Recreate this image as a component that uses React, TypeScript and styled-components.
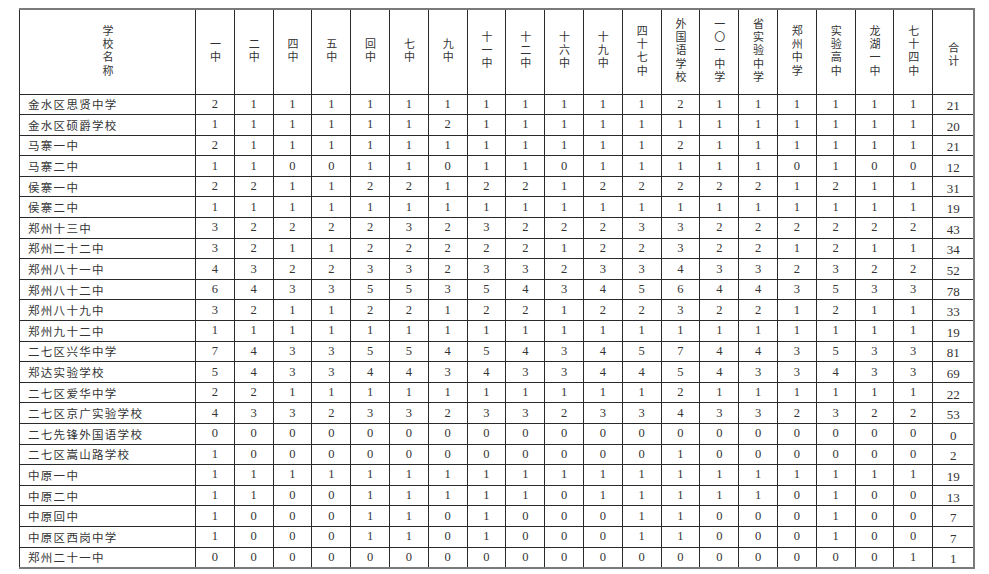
import React from 'react'
import styled, { createGlobalStyle } from 'styled-components'

const GlobalStyle = createGlobalStyle`
  html, body {
    margin: 0;
    padding: 0;
    background: #fff;
  }
  body {
    font-family: "Liberation Serif", "Noto Sans CJK SC", serif;
    color: #222;
  }
`

const Page = styled.div`
  padding: 8px 0 0 19px;
`

const Table = styled.table`
  border-collapse: collapse;
  table-layout: fixed;
  width: 955px;
  border-top: 2px solid #7a7a7a;
  border-right: 2px solid #7a7a7a;
  border-bottom: 2px solid #7a7a7a;
  border-left: 1px solid #222;
`

const Col = styled.col<{ $w: number }>`
  width: ${(p) => p.$w}px;
`

const HeadRow = styled.tr`
  height: 85px;
`

const HeadCell = styled.th`
  padding: 0;
  border: 1px solid #2a2a2a;
  font-family: "Noto Sans CJK SC", sans-serif;
  font-weight: normal;
  font-size: 11px;
  color: #333;
  text-align: center;
  vertical-align: middle;
  overflow: hidden;
`

const TotalHead = styled(HeadCell)`
  padding-top: 8px;
`

// header labels are written top to bottom, one character under the next
const VText = styled.span`
  display: inline-block;
  writing-mode: vertical-rl;
  text-orientation: upright;
  font-feature-settings: "vert" 0, "vrt2" 0;
  letter-spacing: 2.3px;
  line-height: 1;
  margin-bottom: -2.3px;
`

const Row = styled.tr`
  height: 20.6px;
`

const NameCell = styled.td`
  padding: 0 0 0 8px;
  border: 1px solid #2a2a2a;
  font-family: "Noto Sans CJK SC", sans-serif;
  font-size: 11.5px;
  letter-spacing: 1.3px;
  color: #333;
  white-space: nowrap;
  line-height: 16px;
  overflow: hidden;
`

const NumCell = styled.td<{ $total?: boolean }>`
  padding: ${(p) => (p.$total ? '3px 0 0 0' : '0')};
  border: 1px solid #2a2a2a;
  font-family: "Liberation Serif", serif;
  font-size: ${(p) => (p.$total ? '13px' : '12.5px')};
  color: #333;
  text-align: center;
  line-height: 15px;
`

const columns = [
  '一中', '二中', '四中', '五中', '回中', '七中', '九中', '十一中', '十二中', '十六中',
  '十九中', '四十七中', '外国语学校', '一〇一中学', '省实验中学', '郑州中学', '实验高中', '龙湖一中', '七十四中',
]

const rows: [string, number[]][] = [
  ['金水区思贤中学', [2, 1, 1, 1, 1, 1, 1, 1, 1, 1, 1, 1, 2, 1, 1, 1, 1, 1, 1]],
  ['金水区硕爵学校', [1, 1, 1, 1, 1, 1, 2, 1, 1, 1, 1, 1, 1, 1, 1, 1, 1, 1, 1]],
  ['马寨一中', [2, 1, 1, 1, 1, 1, 1, 1, 1, 1, 1, 1, 2, 1, 1, 1, 1, 1, 1]],
  ['马寨二中', [1, 1, 0, 0, 1, 1, 0, 1, 1, 0, 1, 1, 1, 1, 1, 0, 1, 0, 0]],
  ['侯寨一中', [2, 2, 1, 1, 2, 2, 1, 2, 2, 1, 2, 2, 2, 2, 2, 1, 2, 1, 1]],
  ['侯寨二中', [1, 1, 1, 1, 1, 1, 1, 1, 1, 1, 1, 1, 1, 1, 1, 1, 1, 1, 1]],
  ['郑州十三中', [3, 2, 2, 2, 2, 3, 2, 3, 2, 2, 2, 3, 3, 2, 2, 2, 2, 2, 2]],
  ['郑州二十二中', [3, 2, 1, 1, 2, 2, 2, 2, 2, 1, 2, 2, 3, 2, 2, 1, 2, 1, 1]],
  ['郑州八十一中', [4, 3, 2, 2, 3, 3, 2, 3, 3, 2, 3, 3, 4, 3, 3, 2, 3, 2, 2]],
  ['郑州八十二中', [6, 4, 3, 3, 5, 5, 3, 5, 4, 3, 4, 5, 6, 4, 4, 3, 5, 3, 3]],
  ['郑州八十九中', [3, 2, 1, 1, 2, 2, 1, 2, 2, 1, 2, 2, 3, 2, 2, 1, 2, 1, 1]],
  ['郑州九十二中', [1, 1, 1, 1, 1, 1, 1, 1, 1, 1, 1, 1, 1, 1, 1, 1, 1, 1, 1]],
  ['二七区兴华中学', [7, 4, 3, 3, 5, 5, 4, 5, 4, 3, 4, 5, 7, 4, 4, 3, 5, 3, 3]],
  ['郑达实验学校', [5, 4, 3, 3, 4, 4, 3, 4, 3, 3, 4, 4, 5, 4, 3, 3, 4, 3, 3]],
  ['二七区爱华中学', [2, 2, 1, 1, 1, 1, 1, 1, 1, 1, 1, 1, 2, 1, 1, 1, 1, 1, 1]],
  ['二七区京广实验学校', [4, 3, 3, 2, 3, 3, 2, 3, 3, 2, 3, 3, 4, 3, 3, 2, 3, 2, 2]],
  ['二七先锋外国语学校', [0, 0, 0, 0, 0, 0, 0, 0, 0, 0, 0, 0, 0, 0, 0, 0, 0, 0, 0]],
  ['二七区嵩山路学校', [1, 0, 0, 0, 0, 0, 0, 0, 0, 0, 0, 0, 1, 0, 0, 0, 0, 0, 0]],
  ['中原一中', [1, 1, 1, 1, 1, 1, 1, 1, 1, 1, 1, 1, 1, 1, 1, 1, 1, 1, 1]],
  ['中原二中', [1, 1, 0, 0, 1, 1, 1, 1, 1, 0, 1, 1, 1, 1, 1, 0, 1, 0, 0]],
  ['中原回中', [1, 0, 0, 0, 1, 1, 0, 1, 0, 0, 0, 1, 1, 0, 0, 0, 1, 0, 0]],
  ['中原区西岗中学', [1, 0, 0, 0, 1, 1, 0, 1, 0, 0, 0, 1, 1, 0, 0, 0, 1, 0, 0]],
  ['郑州二十一中', [0, 0, 0, 0, 0, 0, 0, 0, 0, 0, 0, 0, 0, 0, 0, 0, 0, 0, 1]],
]

const App = () => {
  return (
    <Page>
      <GlobalStyle />
      <Table>
        <colgroup>
          <Col $w={176} />
          {columns.map((c) => (
            <Col key={c} $w={38.8} />
          ))}
          <Col $w={41.8} />
        </colgroup>
        <thead>
          <HeadRow>
            <HeadCell>
              <VText>学校名称</VText>
            </HeadCell>
            {columns.map((c) => (
              <HeadCell key={c}>
                <VText>{c}</VText>
              </HeadCell>
            ))}
            <TotalHead>
              <VText>合计</VText>
            </TotalHead>
          </HeadRow>
        </thead>
        <tbody>
          {rows.map(([name, vals]) => (
            <Row key={name}>
              <NameCell>{name}</NameCell>
              {vals.map((v, i) => (
                <NumCell key={i}>{v}</NumCell>
              ))}
              <NumCell $total>{vals.reduce((a, b) => a + b, 0)}</NumCell>
            </Row>
          ))}
        </tbody>
      </Table>
    </Page>
  )
}

export default App
